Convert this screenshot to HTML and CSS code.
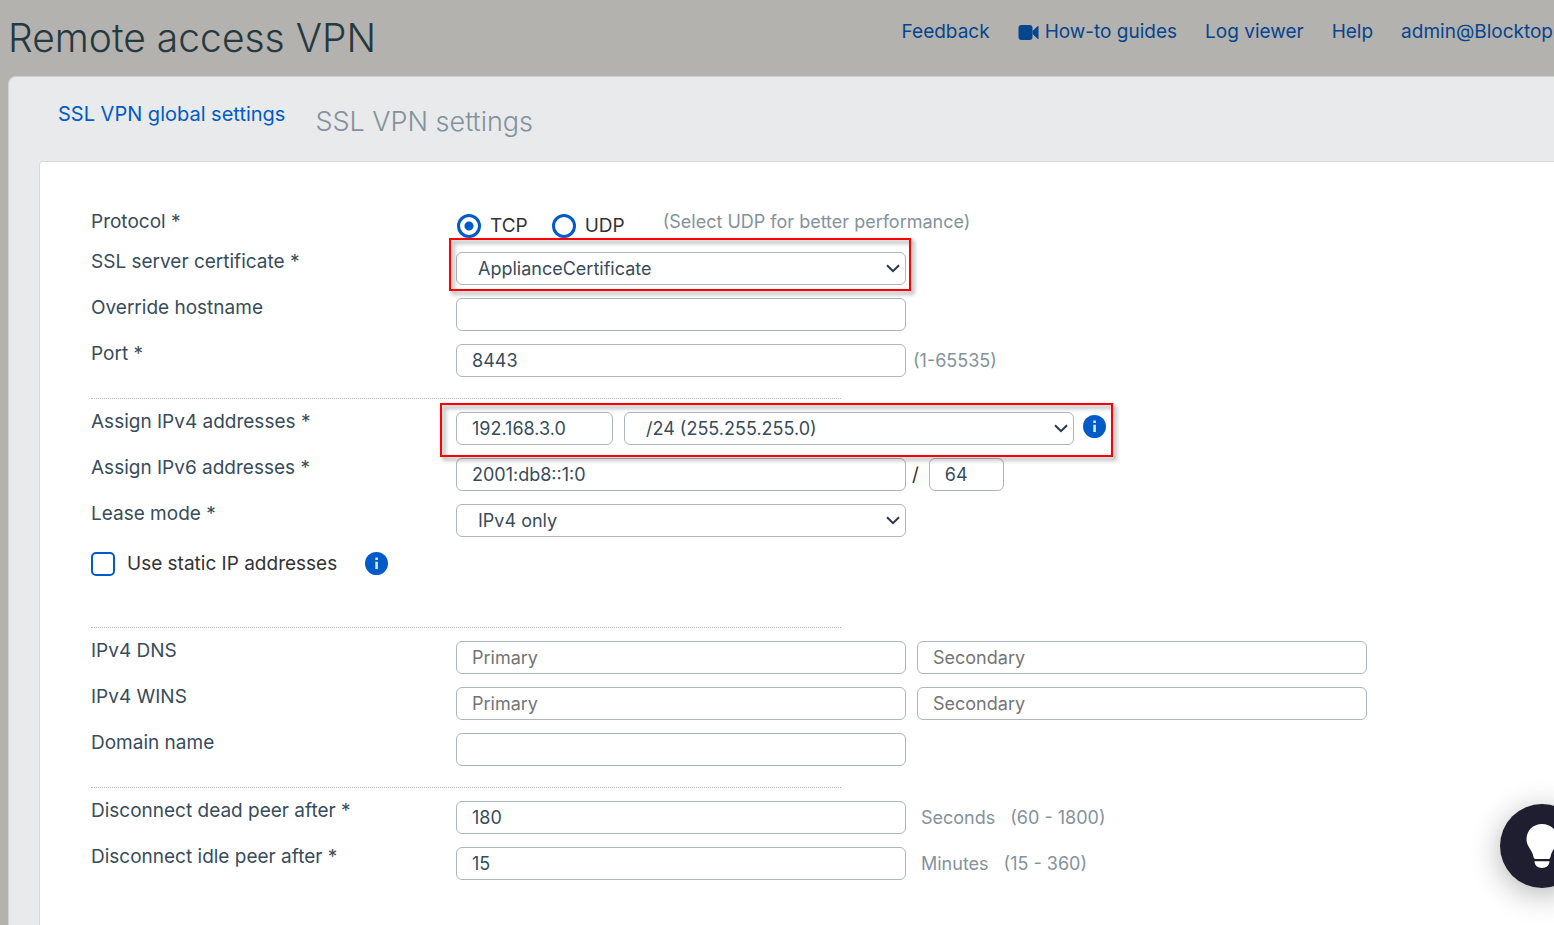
FILE: index.html
```html
<!DOCTYPE html>
<html lang="en">
<head>
<meta charset="utf-8">
<meta name="viewport" content="width=device-width, initial-scale=1">
<title>Remote access VPN</title>
<link rel="stylesheet" href="styles.css">
</head>
<body>
<header class="topbar">
  <h1 class="title">Remote access VPN</h1>
  <nav class="links">
    <a href="#feedback">Feedback</a>
    <a href="#guides" class="with-icon"><svg class="camera" viewBox="0 0 20 15" aria-hidden="true"><rect width="14" height="15" rx="3"/><path d="M14 6 L19 1.200 Q20 .5 20 1.600 V13.400 Q20 14.500 19 13.800 L14 9 Z"/></svg>How-to guides</a>
    <a href="#log">Log viewer</a>
    <a href="#help">Help</a>
    <a href="#account">admin@Blocktop</a>
  </nav>
</header>
<main class="panel">
  <nav class="tabs">
    <a class="tab" href="#global">SSL VPN global settings</a>
    <h2 class="subtitle">SSL VPN settings</h2>
  </nav>
  <form class="card">
    <div class="row protocol">
      <span class="label" id="protocol">Protocol *</span>
      <div class="choices" role="radiogroup" aria-labelledby="protocol">
        <label class="choice"><input class="radio" type="radio" name="protocol" checked>TCP</label>
        <label class="choice"><input class="radio" type="radio" name="protocol">UDP</label>
      </div>
      <span class="tip">(Select UDP for better performance)</span>
    </div>
    <div class="row">
      <label class="label" for="cert">SSL server certificate *</label>
      <div class="fields marked-cert">
        <div class="select wide"><select class="box" id="cert"><option>ApplianceCertificate</option></select><svg class="arrow" viewBox="0 0 14 9" aria-hidden="true"><path d="M1 1.200 L7 7.200 L13 1.200"/></svg></div>
      </div>
    </div>
    <div class="row">
      <label class="label" for="host">Override hostname</label>
      <div class="fields"><input class="box wide" id="host" type="text"></div>
    </div>
    <div class="row">
      <label class="label" for="port">Port *</label>
      <div class="fields"><input class="box wide" id="port" type="text" value="8443"><span class="hint near">(1-65535)</span></div>
    </div>
    <hr class="divider">
    <div class="row">
      <label class="label" for="ipv4">Assign IPv4 addresses *</label>
      <div class="fields marked-ip">
        <input class="box medium" id="ipv4" type="text" value="192.168.3.0">
        <div class="mask">
          <div class="select wide"><select class="box" aria-label="Subnet mask"><option>/24 (255.255.255.0)</option></select><svg class="arrow" viewBox="0 0 14 9" aria-hidden="true"><path d="M1 1.200 L7 7.200 L13 1.200"/></svg></div>
          <button class="info" type="button" aria-label="About IPv4 addresses"><svg viewBox="0 0 23 23" aria-hidden="true"><circle cx="11.500" cy="11.500" r="11.500"/><path d="M10.300 5.500h2.600v2.400h-2.600z M10.300 9.800h2.600v7.200h-2.600z"/></svg></button>
        </div>
      </div>
    </div>
    <div class="row">
      <label class="label" for="ipv6">Assign IPv6 addresses *</label>
      <div class="fields"><input class="box wide" id="ipv6" type="text" value="2001:db8::1:0"><span class="slash">/</span><input class="box small" type="text" value="64" aria-label="Prefix length"></div>
    </div>
    <div class="row">
      <label class="label" for="lease">Lease mode *</label>
      <div class="fields">
        <div class="select wide"><select class="box" id="lease"><option>IPv4 only</option></select><svg class="arrow" viewBox="0 0 14 9" aria-hidden="true"><path d="M1 1.200 L7 7.200 L13 1.200"/></svg></div>
      </div>
    </div>
    <div class="static">
      <label class="choice"><input class="check" type="checkbox">Use static IP addresses</label>
      <button class="info" type="button" aria-label="About static IP addresses"><svg viewBox="0 0 23 23" aria-hidden="true"><circle cx="11.500" cy="11.500" r="11.500"/><path d="M10.300 5.500h2.600v2.400h-2.600z M10.300 9.800h2.600v7.200h-2.600z"/></svg></button>
    </div>
    <hr class="divider">
    <div class="row">
      <label class="label" for="dns">IPv4 DNS</label>
      <div class="fields"><input class="box wide" id="dns" type="text" placeholder="Primary"><input class="box wide" type="text" placeholder="Secondary" aria-label="Secondary DNS"></div>
    </div>
    <div class="row">
      <label class="label" for="wins">IPv4 WINS</label>
      <div class="fields"><input class="box wide" id="wins" type="text" placeholder="Primary"><input class="box wide" type="text" placeholder="Secondary" aria-label="Secondary WINS"></div>
    </div>
    <div class="row">
      <label class="label" for="domain">Domain name</label>
      <div class="fields"><input class="box wide" id="domain" type="text"></div>
    </div>
    <hr class="divider">
    <div class="row">
      <label class="label" for="dead">Disconnect dead peer after *</label>
      <div class="fields"><input class="box wide" id="dead" type="text" value="180"><span class="hint">Seconds</span><span class="hint">(60 - 1800)</span></div>
    </div>
    <div class="row">
      <label class="label" for="idle">Disconnect idle peer after *</label>
      <div class="fields"><input class="box wide" id="idle" type="text" value="15"><span class="hint">Minutes</span><span class="hint">(15 - 360)</span></div>
    </div>
  </form>
</main>
<button class="assist" type="button" aria-label="Assistant"><svg viewBox="0 0 32 44" aria-hidden="true"><path d="M16 0C7 0 .5 6.500 .5 15.200C.5 23 6.500 25.500 7.500 33Q7.800 35 9.500 35H22.500Q24.200 35 24.500 33C25.500 25.500 31.500 23 31.500 15.200C31.500 6.500 25 0 16 0Z M8.500 37.300H23.500C23.500 41.500 20 44 16 44S8.500 41.500 8.500 37.300Z"/></svg></button>
</body>
</html>
```
FILE: styles.css
```css
* { box-sizing: border-box; }

body {
  margin: 0;
  min-height: 100vh;
  display: flex;
  flex-direction: column;
  background: #b4b2ae;
  color: #384c5a;
  font: 19px/20px Inter, "Liberation Sans", sans-serif;
}

a { color: #005bc8; text-decoration: none; }

.topbar {
  display: flex;
  justify-content: space-between;
  align-items: flex-start;
  height: 76px;
  padding: 14px 1px 0 8px;
}
.title { margin: 0; color: #263840; font-size: 39px; line-height: 48px; font-weight: 300; }
.links { display: flex; gap: 28px; padding-top: 8px; }
.links a { color: #04458f; white-space: nowrap; }
.with-icon { display: flex; align-items: center; gap: 6px; }
.camera { width: 21px; height: 15px; fill: #04458f; }

.panel {
  flex: 1;
  display: flex;
  flex-direction: column;
  margin-left: 8px;
  padding-left: 30px;
  border: solid #cfd0d0;
  border-width: 1px 0 0 1px;
  border-radius: 8px 0 0 0;
  background: #e8eaeb;
}
.tabs { display: flex; align-items: flex-start; gap: 30px; height: 84px; padding: 27px 0 0 19px; }
.tab { font-size: 20px; }
.subtitle { margin: 0; color: #84929b; font-size: 27px; line-height: 36px; font-weight: 300; }

.card {
  flex: 1;
  padding: 50px 20px 20px 51px;
  border: solid #d9dadb;
  border-width: 1px 0 0 1px;
  border-radius: 4px 0 0 0;
  background: #fff;
}
.row { display: flex; align-items: flex-start; margin-bottom: 13px; }
.protocol { height: 27px; }
.label { flex: 0 0 365px; }
.fields { position: relative; display: flex; align-items: center; flex: 0 1 auto; gap: 11px; }

.box {
  height: 33px;
  padding: 0 15px;
  border: 1px solid #adb5bd;
  border-radius: 6px;
  background: #fff;
  color: #384c5a;
  font: 18px/24px Inter, "Liberation Sans", sans-serif;
}
.box::placeholder { color: #757575; opacity: 1; }
.wide { width: 450px; }
.medium { width: 157px; }
.small { width: 75px; }
.select { position: relative; display: flex; }
.select .box { flex: 1; padding: 0 21px; appearance: none; }
.mask { display: flex; align-items: flex-start; gap: 9px; }
.mask .info { margin-top: 3px; }
.arrow { position: absolute; right: 6px; top: 12px; width: 14px; height: 9px; fill: none; stroke: #26394a; stroke-width: 2; pointer-events: none; }

.choices { display: flex; gap: 24px; padding: 2px 0 0 1px; }
.choice { display: flex; align-items: center; gap: 9px; height: 24px; color: #333; }
.radio, .check { appearance: none; width: 24px; height: 24px; margin: 0; border: 3px solid #005bc8; background: #fff; }
.radio { border-radius: 50%; }
.radio:checked { background: radial-gradient(circle, #005bc8 4px, #fff 5px); }
.check { border-width: 2px; border-radius: 5px; }
.tip { margin-left: 38px; color: #84929b; font-size: 18px; }
.hint { margin-left: 4px; color: #84929b; font-size: 18px; }
.near { margin-left: -4px; }
.slash { margin: 0 -1px 0 -5px; color: #333; }

.static { display: flex; align-items: center; gap: 28px; height: 69px; padding-bottom: 42px; }
.static .choice { gap: 12px; }
.info { display: flex; width: 23px; height: 23px; padding: 0; border: 0; background: none; }
.info svg { width: 23px; height: 23px; fill: #005bc8; }
.info path { fill: #d5e8fb; }

.divider { width: 750px; max-width: 100%; margin: 0 0 13px; padding-top: 8px; border: 0; border-bottom: 1px dotted #b5b9bc; }

/* Callout frames drawn over the form */
.marked-cert::after,
.marked-ip::after {
  content: "";
  position: absolute;
  border: 2px solid #fe0000;
  filter: drop-shadow(3px 3px 2px rgba(0, 0, 0, .45));
  pointer-events: none;
  z-index: 1;
}
.marked-cert::after { inset: -14px -5px -6px -7px; }
.marked-ip::after { inset: -9px -7px -12px -16px; }

.assist {
  position: fixed;
  right: -30px;
  bottom: 37px;
  display: flex;
  justify-content: center;
  align-items: center;
  width: 84px;
  height: 84px;
  padding: 0;
  border: 0;
  border-radius: 50%;
  background: #1e1e30;
  box-shadow: 0 6px 30px rgba(0, 0, 0, .3);
}
.assist svg { width: 32px; height: 44px; fill: #fff; }
```
